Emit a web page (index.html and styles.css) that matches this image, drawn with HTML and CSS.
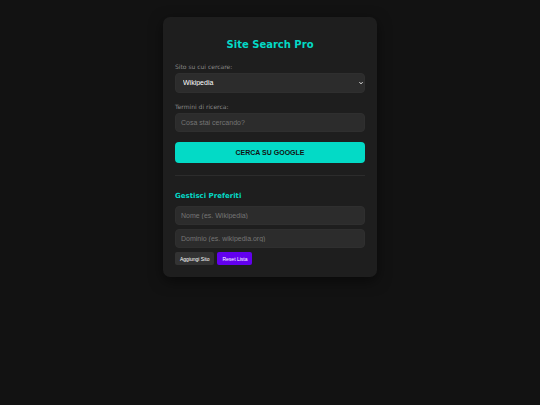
FILE: index.html
```html
<!DOCTYPE html>
<html lang="it">
<head>
    <meta charset="UTF-8">
    <meta name="viewport" content="width=device-width, initial-scale=1.0">
    <title>Site Search Pro</title>
    <link rel="stylesheet" href="styles.css">
</head>
<body>
    <main class="container">
        <h1>Site Search Pro</h1>

        <form class="search">
            <label for="site">Sito su cui cercare:</label>
            <div class="select-wrap">
                <select id="site">
                    <option value="wikipedia.org">Wikipedia</option>
                </select>
                <svg class="arrow" viewBox="0 0 8 5" aria-hidden="true">
                    <path d="M1 1l3 3 3-3" fill="none" stroke="currentColor" stroke-width="2"/>
                </svg>
            </div>

            <label for="query">Termini di ricerca:</label>
            <input type="text" id="query" placeholder="Cosa stai cercando?">

            <button type="button" class="btn-search">CERCA SU GOOGLE</button>
        </form>

        <section class="manage">
            <h2>Gestisci Preferiti</h2>
            <input type="text" id="newName" aria-label="Nome" placeholder="Nome (es. Wikipedia)">
            <input type="text" id="newDomain" aria-label="Dominio" placeholder="Dominio (es. wikipedia.org)">
            <div class="actions">
                <button type="button" class="btn-small">Aggiungi Sito</button>
                <button type="button" class="btn-small btn-reset">Reset Lista</button>
            </div>
        </section>
    </main>
</body>
</html>
```

FILE: styles.css
```css
* {
    box-sizing: border-box;
}

body {
    margin: 0;
    padding: 17px;
    min-height: 100vh;
    display: flex;
    justify-content: center;
    align-items: flex-start;
    background-color: #121212;
    color: #e0e0e0;
    font-family: "DejaVu Sans", sans-serif;
}

.container {
    width: 100%;
    max-width: 214px;
    padding: 21px 12px 12px;
    background: #1e1e1e;
    border-radius: 7px;
    box-shadow: 0 4px 14px rgba(0, 0, 0, 0.5);
}

h1 {
    margin: 0 0 11px;
    color: #03dac6;
    font-size: 10px;
    line-height: 14px;
    text-align: center;
}

label {
    display: block;
    margin-bottom: 2px;
    color: #888;
    font-size: 6px;
    line-height: 8px;
}

input,
select {
    display: block;
    width: 100%;
    height: 19px;
    padding: 0 5px;
    border: 1px solid #2f2f2f;
    border-radius: 4px;
    background: #2c2c2c;
    color: #fff;
    font-family: "Liberation Sans", Arial, sans-serif;
    font-size: 7px;
}

input::placeholder {
    color: #757575;
}

.select-wrap {
    position: relative;
    margin-bottom: 10px;
}

select {
    height: 20px;
    padding: 0 7px 1px;
    appearance: none;
}

.arrow {
    position: absolute;
    top: 8px;
    right: 2px;
    width: 4px;
    height: 4px;
    color: #fff;
    pointer-events: none;
}

button {
    border: none;
    font-family: "Liberation Sans", Arial, sans-serif;
    cursor: pointer;
}

.btn-search {
    display: block;
    width: 100%;
    height: 21px;
    margin-top: 10px;
    padding: 0;
    border-radius: 4px;
    background: #03dac6;
    color: #121212;
    font-size: 7px;
    font-weight: bold;
}

.manage {
    margin-top: 12px;
    padding-top: 15px;
    border-top: 1px solid #2c2c2c;
}

h2 {
    margin: 0 0 5px;
    color: #03dac6;
    font-size: 7px;
    line-height: 10px;
}

.manage input {
    margin-bottom: 4px;
}

.actions {
    display: flex;
    gap: 3px;
}

.btn-small {
    height: 13px;
    padding: 0 5px;
    border-radius: 2px;
    background: #333;
    color: #fff;
    font-size: 5px;
}

.btn-reset {
    background: #6200ee;
}
```
